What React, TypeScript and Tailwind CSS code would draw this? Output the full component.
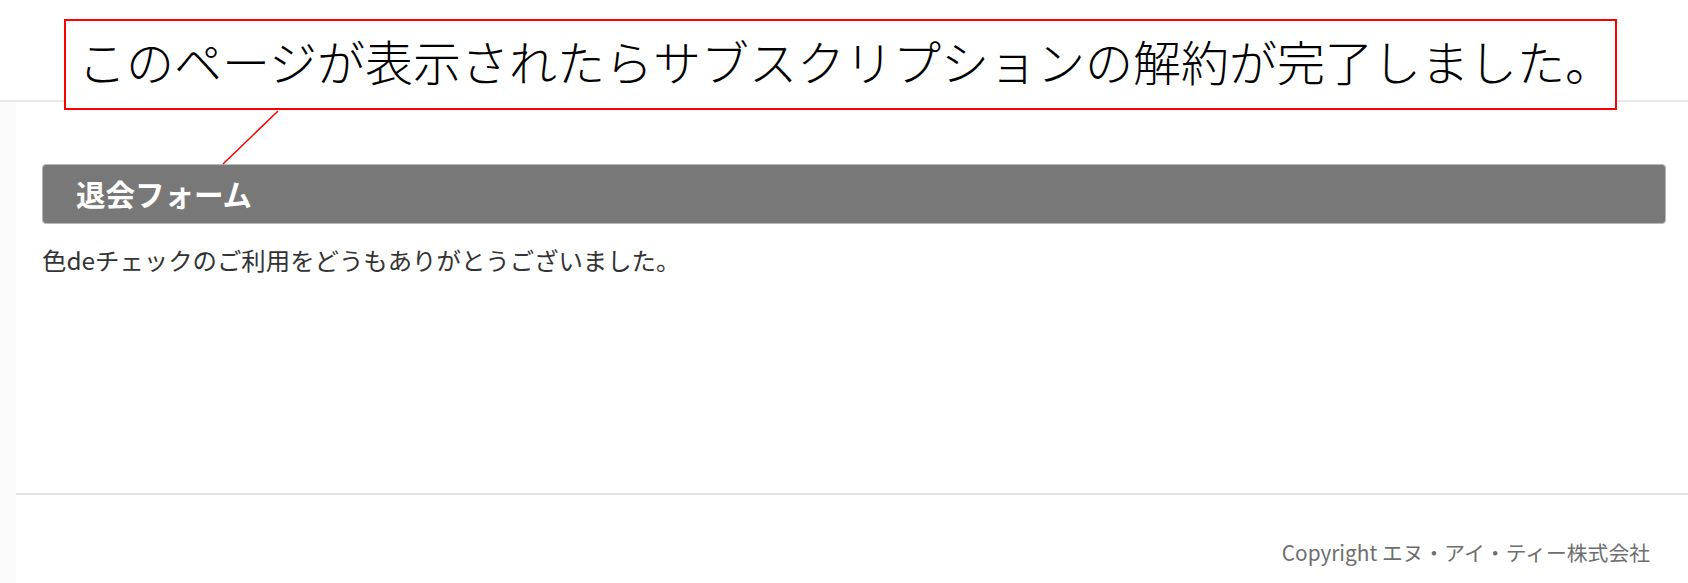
const jp = "font-['Noto_Sans_CJK_JP','Noto_Sans',sans-serif]";

export default function App() {
  return (
    <div className={`relative w-full h-[583px] overflow-hidden bg-white ${jp}`}>
      {/* Header */}
      <header className="h-[102px] border-b-2 border-[#e8e8e8]" />

      <div className="flex h-[481px]">
        {/* Left strip */}
        <div className="w-[16px] bg-[#fafafa]" />

        <div className="flex flex-1 flex-col">
          {/* Main */}
          <main className="h-[391px] pl-[26px] pr-[22px] pt-[62px]">
            <div className="flex h-[60px] items-center rounded-[4px] border border-[#b8b8b8] bg-[#787878] pl-[33px]">
              <h2 className="text-[29.5px] font-bold leading-none text-white">退会フォーム</h2>
            </div>
            <p className="mt-[18px] text-[24.4px] leading-[36px] text-[#333333]">
              色deチェックのご利用をどうもありがとうございました。
            </p>
          </main>

          {/* Footer */}
          <footer className="flex-1 border-t-2 border-[#e3e3e3] pr-[38px] pt-[42px] text-right">
            <p className="text-[20.8px] leading-[30px] text-[#6e6e6e]">Copyright エヌ・アイ・ティー株式会社</p>
          </footer>
        </div>
      </div>

      {/* Annotation */}
      <div className="absolute left-[64px] top-[19px] h-[91px] w-[1553px] border-2 border-[#ff0000] bg-white pl-[12px] pt-[16px]">
        <p className="text-[48px] font-light leading-[47px] whitespace-nowrap text-black">
          このページが表示されたらサブスクリプションの解約が完了しました。
        </p>
      </div>
      <svg className="absolute left-0 top-0" width="1688" height="583" pointerEvents="none">
        <line x1="278" y1="111" x2="223" y2="164" stroke="#ff0000" strokeWidth="1.5" />
      </svg>
    </div>
  );
}
